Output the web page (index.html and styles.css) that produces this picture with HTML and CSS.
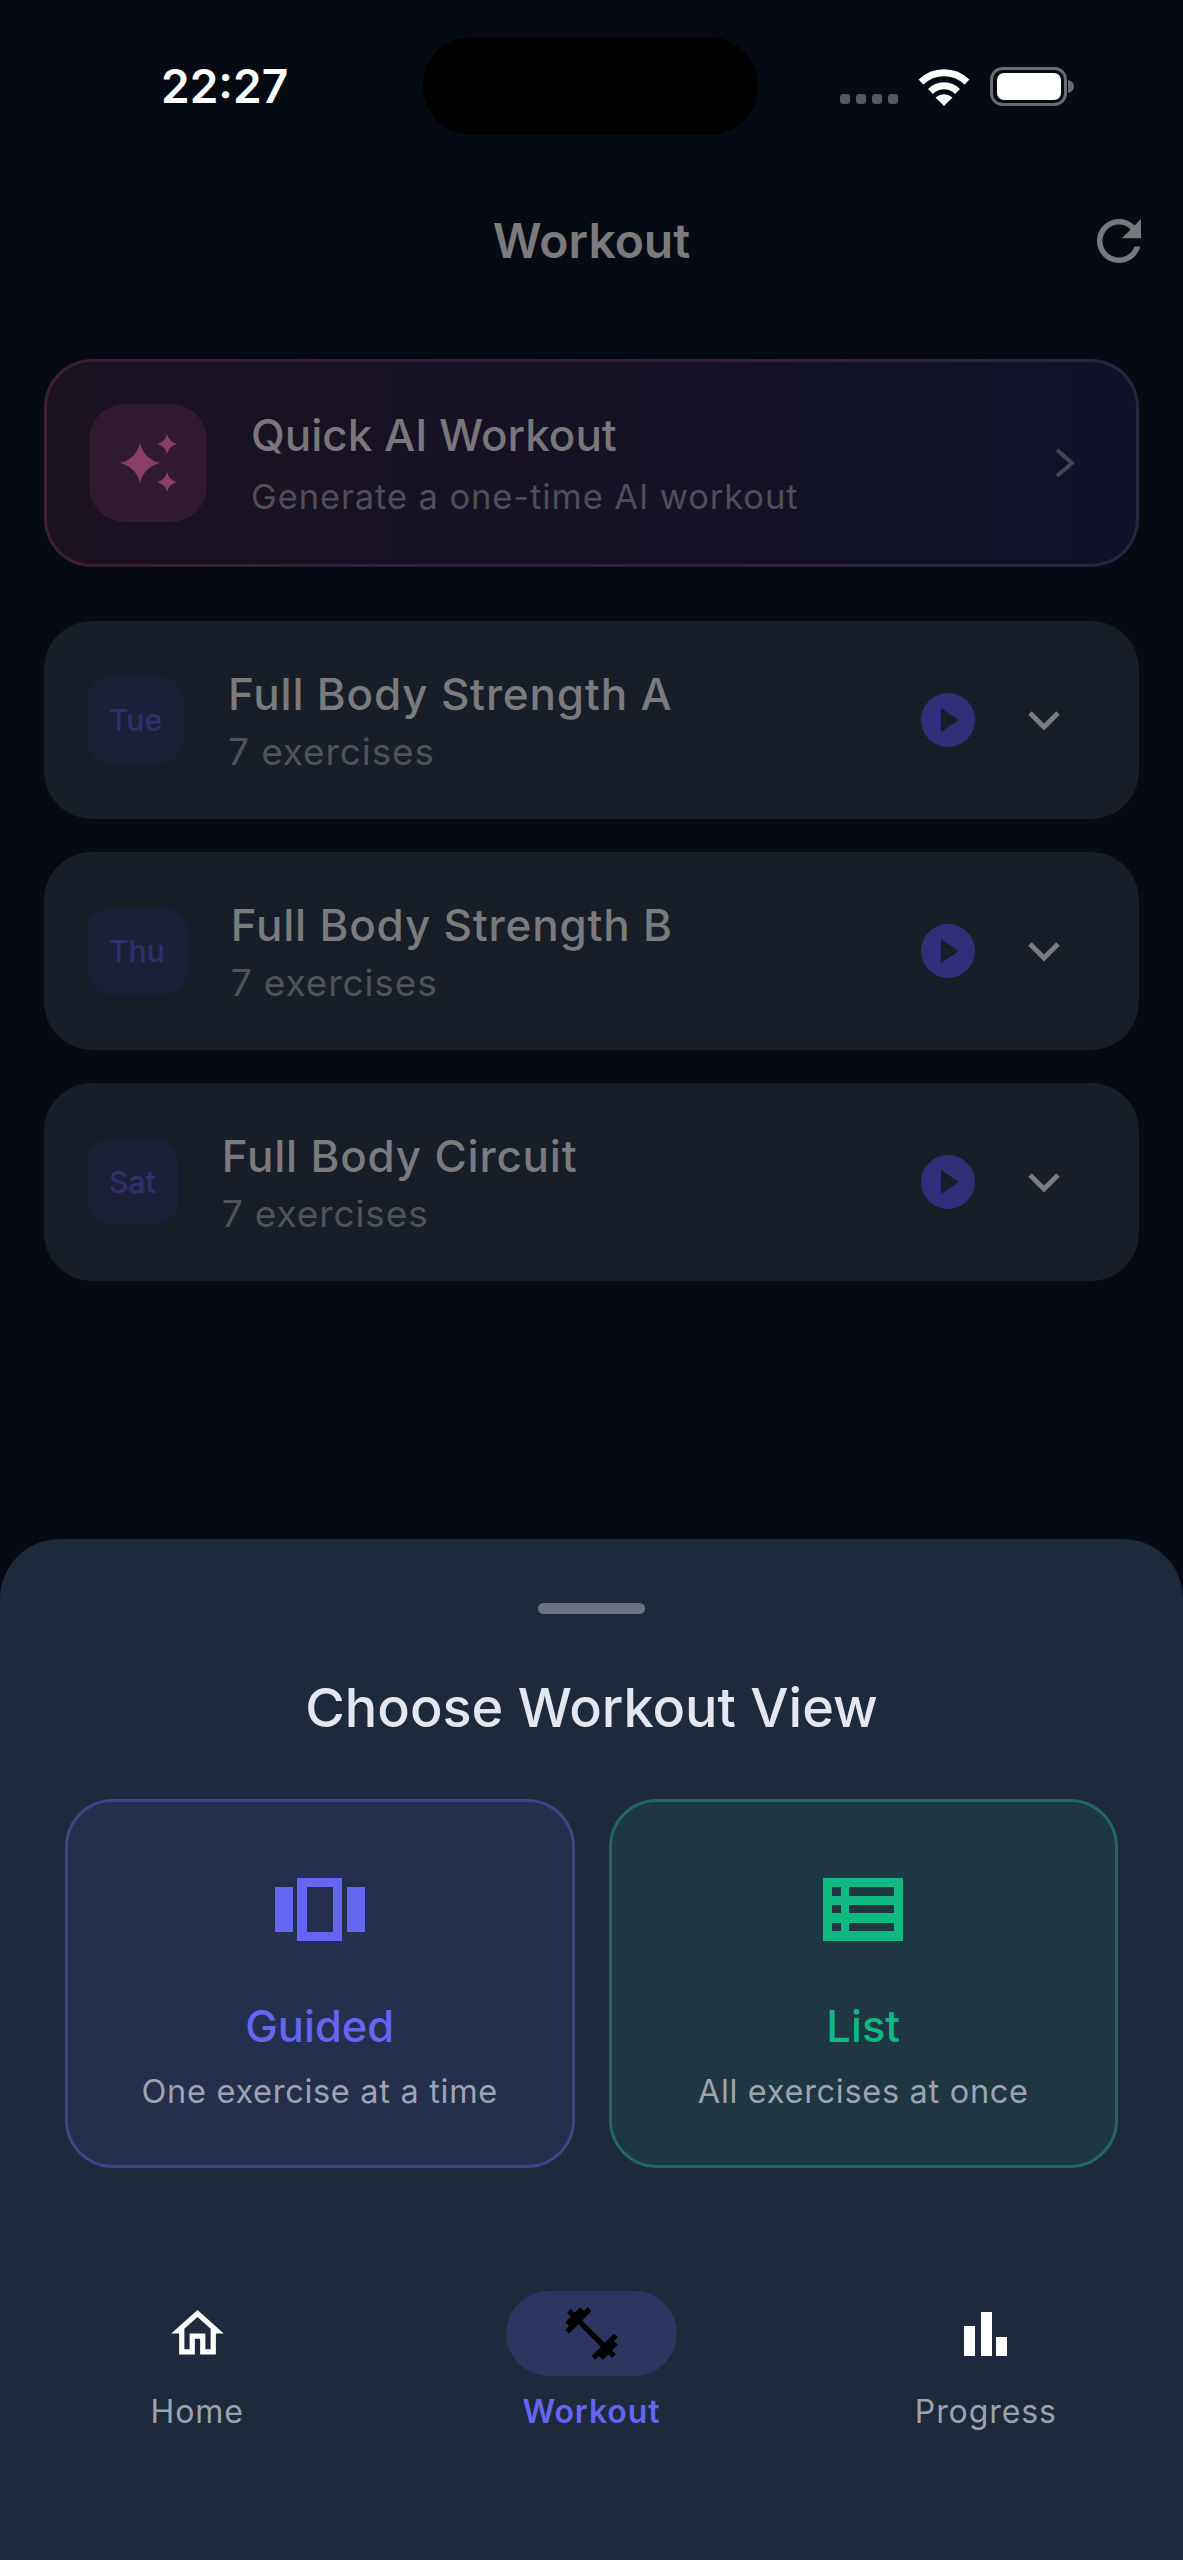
FILE: index.html
```html
<!DOCTYPE html>
<html lang="en">
<head>
    <meta charset="UTF-8">
    <meta name="viewport" content="width=device-width, initial-scale=1.0">
    <title>Workout</title>
    <link rel="stylesheet" href="styles.css">
</head>
<body>
    <main class="screen">
        <div class="status-bar">
            <span class="time">22:27</span>
            <span class="island"></span>
            <div class="status-icons">
                <div class="signal"><i></i><i></i><i></i><i></i></div>
                <svg class="wifi" width="52" height="39" viewBox="0 0 52 39">
                    <path d="M3 15A33 33 0 0 1 49 15" fill="none" stroke="#fff" stroke-width="7"/>
                    <path d="M12.500 24.500A19 19 0 0 1 39.500 24.500" fill="none" stroke="#fff" stroke-width="7"/>
                    <path d="M17.500 30.500Q26 24 34.500 30.500L26 39Z" fill="#fff"/>
                </svg>
                <svg class="battery" width="84" height="39" viewBox="0 0 84 39">
                    <rect x="1.500" y="1.500" width="74" height="36" rx="11" fill="none" stroke="#6a6c71" stroke-width="3"/>
                    <rect x="7" y="6" width="64" height="27" rx="7" fill="#fff"/>
                    <path d="M78 13C82 14 84 16 84 19.500C84 23 82 25 78 26Z" fill="#6a6c71"/>
                </svg>
            </div>
        </div>

        <header class="top-bar">
            <span></span>
            <h1>Workout</h1>
            <svg class="refresh" width="66" height="66" viewBox="0 0 24 24">
                <path d="M17.650 6.350C16.200 4.900 14.210 4 12 4c-4.420 0-7.990 3.580-7.990 8s3.570 8 7.990 8c3.730 0 6.840-2.550 7.730-6h-2.080c-.82 2.330-3.040 4-5.650 4-3.310 0-6-2.690-6-6s2.690-6 6-6c1.660 0 3.140.69 4.220 1.780L13 11h7V4l-2.350 2.350z" fill="#77797c"/>
            </svg>
        </header>

        <section class="plans">
            <div class="ai-card">
                <div class="ai-icon">
                    <svg width="70" height="70" viewBox="0 0 70 70">
                        <path d="M24 3Q28 19 44 23Q28 27 24 43Q20 27 4 23Q20 19 24 3Z" fill="#8a3f68"/>
                        <path d="M51 -6Q53 2 61 4Q53 6 51 14Q49 6 41 4Q49 2 51 -6Z" fill="#8a3f68"/>
                        <path d="M51 32Q53 40 61 42Q53 44 51 52Q49 44 41 42Q49 40 51 32Z" fill="#8a3f68"/>
                    </svg>
                </div>
                <div class="ai-text">
                    <div class="ai-title">Quick AI Workout</div>
                    <div class="ai-sub">Generate a one-time AI workout</div>
                </div>
                <svg class="chevron-right" width="22" height="30" viewBox="0 0 22 30">
                    <path d="M3 2L18 15L3 28" fill="none" stroke="#44454f" stroke-width="4"/>
                </svg>
            </div>

            <div class="plan-row">
                <span class="day">Tue</span>
                <div class="plan-text">
                    <div class="plan-title">Full Body Strength A</div>
                    <div class="plan-sub">7 exercises</div>
                </div>
                <svg class="play" width="54" height="54" viewBox="0 0 54 54">
                    <circle cx="27" cy="27" r="27" fill="#312f7a"/>
                    <path d="M20 15L38 27L20 39Z" fill="#171e28"/>
                </svg>
                <svg class="chevron-down" width="32" height="20" viewBox="0 0 32 20">
                    <path d="M2 3L16 17L30 3" fill="none" stroke="#7a7c80" stroke-width="5"/>
                </svg>
            </div>

            <div class="plan-row">
                <span class="day">Thu</span>
                <div class="plan-text">
                    <div class="plan-title">Full Body Strength B</div>
                    <div class="plan-sub">7 exercises</div>
                </div>
                <svg class="play" width="54" height="54" viewBox="0 0 54 54">
                    <circle cx="27" cy="27" r="27" fill="#312f7a"/>
                    <path d="M20 15L38 27L20 39Z" fill="#171e28"/>
                </svg>
                <svg class="chevron-down" width="32" height="20" viewBox="0 0 32 20">
                    <path d="M2 3L16 17L30 3" fill="none" stroke="#7a7c80" stroke-width="5"/>
                </svg>
            </div>

            <div class="plan-row">
                <span class="day">Sat</span>
                <div class="plan-text">
                    <div class="plan-title">Full Body Circuit</div>
                    <div class="plan-sub">7 exercises</div>
                </div>
                <svg class="play" width="54" height="54" viewBox="0 0 54 54">
                    <circle cx="27" cy="27" r="27" fill="#312f7a"/>
                    <path d="M20 15L38 27L20 39Z" fill="#171e28"/>
                </svg>
                <svg class="chevron-down" width="32" height="20" viewBox="0 0 32 20">
                    <path d="M2 3L16 17L30 3" fill="none" stroke="#7a7c80" stroke-width="5"/>
                </svg>
            </div>
        </section>

        <section class="sheet">
            <div class="handle"></div>
            <h2>Choose Workout View</h2>
            <div class="view-options">
                <div class="view-card guided">
                    <svg width="90" height="63" viewBox="0 0 90 63">
                        <path d="M0 9H18V54H0ZM72 9H90V54H72Z" fill="#6366f1"/>
                        <path fill-rule="evenodd" d="M22 0H67V63H22ZM32 9V54H58V9Z" fill="#6366f1"/>
                    </svg>
                    <div class="view-name">Guided</div>
                    <div class="view-sub">One exercise at a time</div>
                </div>
                <div class="view-card list">
                    <svg width="80" height="63" viewBox="0 0 80 63">
                        <path fill-rule="evenodd" d="M0 0H80V63H0ZM9 9V18H18V9ZM26 9V18H71V9ZM9 27V35H18V27ZM26 27V35H71V27ZM9 45V53H18V45ZM26 45V53H71V45Z" fill="#10b981"/>
                    </svg>
                    <div class="view-name">List</div>
                    <div class="view-sub">All exercises at once</div>
                </div>
            </div>

            <nav class="tab-bar">
                <div class="tab">
                    <div class="tab-icon">
                        <svg width="63" height="63" viewBox="0 0 24 24">
                            <path d="M12 5.690l5 4.500V18h-2v-6H9v6H7v-7.810l5-4.500M12 3L2 12h3v8h6v-6h2v6h6v-8h3L12 3z" fill="#fff"/>
                        </svg>
                    </div>
                    <span>Home</span>
                </div>
                <div class="tab active">
                    <div class="tab-icon">
                        <svg width="63" height="63" viewBox="0 0 24 24">
                            <path d="M20.570 14.860L22 13.430 20.570 12 17 15.570 8.430 7 12 3.430 10.570 2 9.140 3.430 7.710 2 5.570 4.140 4.140 2.710 2.710 4.140l1.430 1.430L2 7.710l1.430 1.430L2 10.570 3.430 12 7 8.430 15.570 17 12 20.570 13.430 22l1.430-1.430L16.290 22l2.140-2.140 1.430 1.430 1.430-1.430-1.430-1.430L22 16.290z" fill="#000"/>
                        </svg>
                    </div>
                    <span>Workout</span>
                </div>
                <div class="tab">
                    <div class="tab-icon">
                        <svg width="43" height="44" viewBox="0 0 43 44">
                            <path d="M0 14H11V44H0ZM17 0H28V44H17ZM32 25H43V44H32Z" fill="#fff"/>
                        </svg>
                    </div>
                    <span>Progress</span>
                </div>
            </nav>
        </section>
    </main>
</body>
</html>
```

FILE: styles.css
```css
* {
    box-sizing: border-box;
}

body {
    margin: 0;
    background-color: #060a12;
    font-family: Inter, "Noto Sans", sans-serif;
}

svg {
    display: block;
    overflow: visible;
    flex-shrink: 0;
}

.screen {
    display: flex;
    flex-direction: column;
    width: 1183px;
    height: 2560px;
    overflow: hidden;
}

/* status bar */

.status-bar {
    display: grid;
    grid-template-columns: 423px 335px 1fr;
    align-items: center;
    margin-top: 37px;
    height: 98px;
}

.time {
    padding-left: 161px;
    color: #fff;
    font-size: 46px;
    font-weight: 600;
}

.island {
    height: 98px;
    border-radius: 49px;
    background-color: #000;
}

.status-icons {
    display: flex;
    align-items: flex-end;
    gap: 20px;
    padding-left: 82px;
}

.signal {
    display: flex;
    gap: 6px;
    margin-bottom: 2px;
}

.signal i {
    width: 10px;
    height: 10px;
    border-radius: 3px;
    background-color: #55575c;
}

/* header */

.top-bar {
    display: grid;
    grid-template-columns: 1fr auto 1fr;
    align-items: center;
    margin-top: 73px;
    padding: 0 31px;
}

.top-bar h1 {
    margin: 0;
    color: #7b7b7d;
    font-size: 48px;
    font-weight: 600;
    line-height: 66px;
}

.refresh {
    justify-self: end;
}

/* plans */

.plans {
    flex: 1;
    display: flex;
    flex-direction: column;
    gap: 33px;
    margin-top: 85px;
    padding: 0 44px;
}

.ai-card {
    display: flex;
    align-items: center;
    height: 208px;
    margin-bottom: 21px;
    padding-left: 42px;
    padding-right: 60px;
    border: 3px solid transparent;
    border-radius: 48px;
    background: linear-gradient(90deg, #1b1220, #0f1227) padding-box,
        linear-gradient(90deg, #3b1e38, #2b2342) border-box;
}

.ai-icon {
    display: flex;
    align-items: center;
    justify-content: center;
    width: 118px;
    height: 118px;
    border-radius: 36px;
    background-color: #2f1a2e;
}

.ai-icon svg {
    margin-top: 24px;
    margin-left: 6px;
}

.ai-text {
    flex: 1;
    margin-left: 44px;
}

.ai-title {
    color: #79777b;
    font-size: 44px;
    font-weight: 500;
    line-height: 56px;
}

.ai-sub {
    margin-top: 11px;
    color: #504f59;
    font-size: 34.500px;
    letter-spacing: 0.9px;
    line-height: 46px;
}

.plan-row {
    display: flex;
    align-items: center;
    height: 198px;
    padding-left: 43px;
    padding-right: 79px;
    border-radius: 48px;
    background-color: #171e28;
}

.day {
    padding: 0 22px;
    height: 86px;
    border-radius: 24px;
    background-color: #1b2038;
    color: #312e6e;
    font-size: 30px;
    font-weight: 500;
    line-height: 86px;
}

.plan-text {
    flex: 1;
    margin-left: 44px;
}

.plan-title {
    color: #7b7b7d;
    font-size: 44px;
    font-weight: 500;
    letter-spacing: 0.8px;
    line-height: 56px;
}

.plan-sub {
    margin-top: 7px;
    color: #50545a;
    font-size: 37px;
    letter-spacing: 0.9px;
    line-height: 46px;
}

.chevron-down {
    margin-left: 53px;
}

/* bottom sheet */

.sheet {
    display: flex;
    flex-direction: column;
    height: 1021px;
    padding-top: 64px;
    border-radius: 60px 60px 0 0;
    background-color: #1e293b;
}

.handle {
    align-self: center;
    width: 107px;
    height: 11px;
    border-radius: 6px;
    background-color: #6b7280;
}

.sheet h2 {
    margin: 59px 0 56px;
    color: #e6e6ef;
    font-size: 54px;
    font-weight: 500;
    line-height: 70px;
    text-align: center;
}

.view-options {
    display: grid;
    grid-template-columns: 1fr 1fr;
    gap: 34px;
    padding: 0 65px;
}

.view-card {
    display: flex;
    flex-direction: column;
    align-items: center;
    height: 369px;
    padding-top: 76px;
    border: 3px solid;
    border-radius: 48px;
}

.view-card.guided {
    border-color: #3f4683;
    background-color: #262e4d;
    color: #6366f1;
}

.view-card.list {
    border-color: #23685f;
    background-color: #1e3743;
    color: #10b981;
}

.view-name {
    margin-top: 58px;
    font-size: 43.500px;
    font-weight: 500;
    line-height: 54px;
}

.view-sub {
    margin-top: 17px;
    color: #9ea3af;
    font-size: 32.500px;
    font-weight: 400;
    letter-spacing: 0.7px;
    line-height: 44px;
}

.tab-bar {
    display: grid;
    grid-template-columns: repeat(3, 1fr);
    margin-top: 123px;
}

.tab {
    display: flex;
    flex-direction: column;
    align-items: center;
    color: #9ca3af;
    font-size: 32px;
    font-weight: 400;
    letter-spacing: 0.9px;
    line-height: 44px;
}

.tab-icon {
    display: flex;
    align-items: center;
    justify-content: center;
    width: 171px;
    height: 85px;
    margin-bottom: 14px;
    border-radius: 43px;
}

.tab.active {
    color: #6366f1;
    font-weight: 600;
}

.tab.active .tab-icon {
    background-color: #2d3561;
}
```
